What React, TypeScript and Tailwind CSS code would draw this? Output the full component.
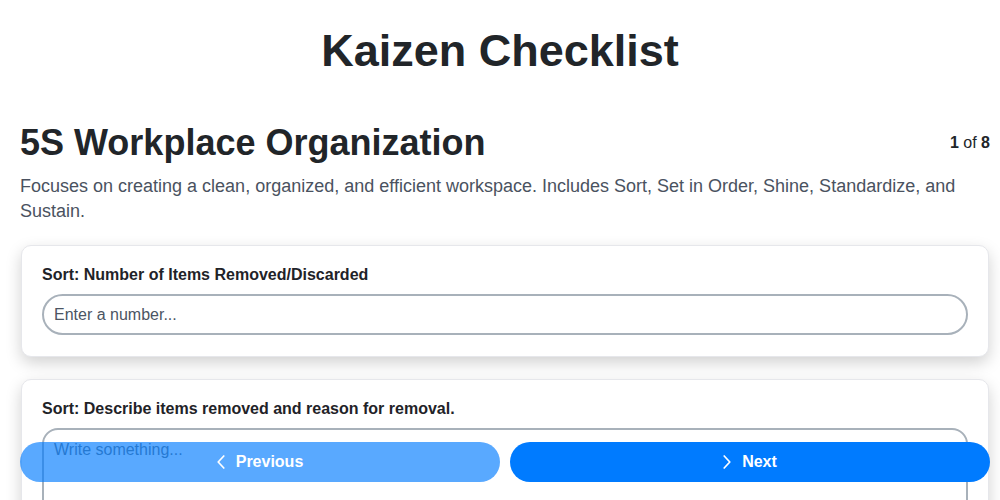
import React from "react";

function Chev({ dir }: { dir: "left" | "right" }) {
  return (
    <svg width="8" height="14" viewBox="0 0 8 14" fill="none" stroke="currentColor" strokeWidth="1.7" strokeLinecap="round" strokeLinejoin="round">
      {dir === "left" ? <path d="M6.8 1 L1.2 7 L6.8 13" /> : <path d="M1.2 1 L6.8 7 L1.2 13" />}
    </svg>
  );
}

export default function App() {
  return (
    <div className="min-h-screen bg-white pl-5 pr-[10px] pb-24 font-['Liberation_Sans',Arial,sans-serif] text-[#212529]">
      <h1 className="mr-[10px] pt-[24px] text-center text-[45px] font-bold leading-[54px]">Kaizen Checklist</h1>
      <div className="mt-[43px] flex items-center justify-between">
        <h2 className="text-[36px] font-bold leading-[43px]">5S Workplace Organization</h2>
        <div className="text-[16px]">
          <span className="font-bold">1</span> of <span className="font-bold">8</span>
        </div>
      </div>
      <p className="mt-[10px] pr-[25px] text-[18px] leading-[25px] text-[#4a5260]">
        Focuses on creating a clean, organized, and efficient workspace. Includes Sort, Set in Order, Shine, Standardize, and Sustain.
      </p>
      <div className="mt-[21px] flex flex-col gap-[22px]">
        <div className="mx-[1px] rounded-[10px] border border-[#e6e7eb] bg-white px-5 pt-5 pb-[21px] shadow-[0_6px_16px_rgba(0,0,0,0.18)]">
          <label className="block text-[16px] font-bold leading-[18px] text-[#1f2328]">Sort: Number of Items Removed/Discarded</label>
          <input
            type="text"
            placeholder="Enter a number..."
            className="mt-[10px] block h-[41px] w-full rounded-full border-2 border-[#a8b1ba] px-[10px] text-[16px] text-[#212529] placeholder:text-[#4b5563] outline-none"
          />
        </div>
        <div className="mx-[1px] rounded-[10px] border border-[#e6e7eb] bg-white px-5 pt-5 pb-[21px] shadow-[0_6px_16px_rgba(0,0,0,0.18)]">
          <label className="block text-[16px] font-bold leading-[18px] text-[#1f2328]">Sort: Describe items removed and reason for removal.</label>
          <textarea
            placeholder="Write something..."
            className="mt-[10px] block h-[120px] w-full resize-y rounded-[16px] border-2 border-[#a8b1ba] px-[10px] py-[8px] text-[16px] text-[#212529] placeholder:text-[#6c757d] outline-none"
          />
        </div>
      </div>
      <div className="fixed bottom-[18px] left-5 right-[10px] flex gap-[10px]">
        <button className="flex h-[40px] flex-1 items-center justify-center gap-[11px] rounded-full bg-[#007bff] text-[16px] font-bold text-white opacity-65">
          <Chev dir="left" />
          Previous
        </button>
        <button className="flex h-[40px] flex-1 items-center justify-center gap-[11px] rounded-full bg-[#007bff] text-[16px] font-bold text-white">
          <Chev dir="right" />
          Next
        </button>
      </div>
    </div>
  );
}
